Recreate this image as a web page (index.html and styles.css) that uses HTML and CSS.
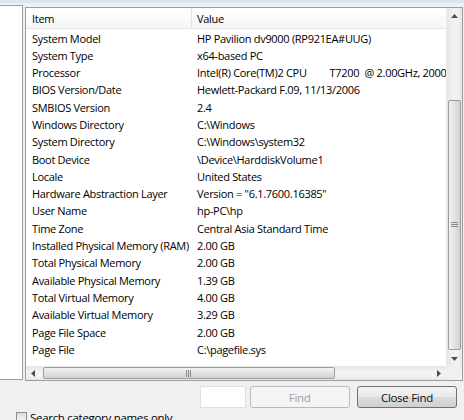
FILE: index.html
```html
<!DOCTYPE html>
<html>
<head>
<meta charset="utf-8">
<link rel="stylesheet" href="styles.css">
</head>
<body>
<div class="window">
  <div class="topstrip"></div>
  <div class="panes">
    <div class="tree"></div>
    <div class="listbox">
      <div class="listmain">
        <div class="listcontent">
          <div class="header">
            <div class="hc c1">Item</div>
            <div class="hc c2">Value</div>
          </div>
          <div class="rows">
            <div class="row"><span class="c1">System Model</span><span class="c2">HP Pavilion dv9000 (RP921EA#UUG)</span></div>
            <div class="row"><span class="c1">System Type</span><span class="c2">x64-based PC</span></div>
            <div class="row"><span class="c1">Processor</span><span class="c2">Intel(R) Core(TM)2 CPU         T7200  @ 2.00GHz, 2000 Mhz, 2 Core(s)</span></div>
            <div class="row"><span class="c1">BIOS Version/Date</span><span class="c2">Hewlett-Packard F.09, 11/13/2006</span></div>
            <div class="row"><span class="c1">SMBIOS Version</span><span class="c2">2.4</span></div>
            <div class="row"><span class="c1">Windows Directory</span><span class="c2">C:\Windows</span></div>
            <div class="row"><span class="c1">System Directory</span><span class="c2">C:\Windows\system32</span></div>
            <div class="row"><span class="c1">Boot Device</span><span class="c2">\Device\HarddiskVolume1</span></div>
            <div class="row"><span class="c1">Locale</span><span class="c2">United States</span></div>
            <div class="row"><span class="c1">Hardware Abstraction Layer</span><span class="c2">Version = "6.1.7600.16385"</span></div>
            <div class="row"><span class="c1">User Name</span><span class="c2">hp-PC\hp</span></div>
            <div class="row"><span class="c1">Time Zone</span><span class="c2">Central Asia Standard Time</span></div>
            <div class="row"><span class="c1">Installed Physical Memory (RAM)</span><span class="c2">2.00 GB</span></div>
            <div class="row"><span class="c1">Total Physical Memory</span><span class="c2">2.00 GB</span></div>
            <div class="row"><span class="c1">Available Physical Memory</span><span class="c2">1.39 GB</span></div>
            <div class="row"><span class="c1">Total Virtual Memory</span><span class="c2">4.00 GB</span></div>
            <div class="row"><span class="c1">Available Virtual Memory</span><span class="c2">3.29 GB</span></div>
            <div class="row"><span class="c1">Page File Space</span><span class="c2">2.00 GB</span></div>
            <div class="row"><span class="c1">Page File</span><span class="c2">C:\pagefile.sys</span></div>
          </div>
        </div>
        <div class="vscroll">
          <div class="sarrow">
            <svg width="7" height="4" viewBox="0 0 7 4"><path d="M0 4 L3.5 0 L7 4 Z" fill="#4d4d4d"/></svg>
          </div>
          <div class="vtrack">
            <div class="vthumb">
              <svg width="7" height="6" viewBox="0 0 7 6"><path d="M0 0.5H7M0 2.5H7M0 4.5H7" stroke="#8a8a8a" stroke-width="1"/></svg>
            </div>
          </div>
          <div class="sarrow">
            <svg width="7" height="4" viewBox="0 0 7 4"><path d="M0 0 L3.5 4 L7 0 Z" fill="#4d4d4d"/></svg>
          </div>
        </div>
      </div>
      <div class="hrow">
        <div class="hscroll">
          <div class="harrow">
            <svg width="4" height="7" viewBox="0 0 4 7"><path d="M4 0 L0 3.5 L4 7 Z" fill="#4d4d4d"/></svg>
          </div>
          <div class="htrack">
            <div class="hthumb">
              <svg width="6" height="7" viewBox="0 0 6 7"><path d="M0.5 0V7M2.5 0V7M4.5 0V7" stroke="#8a8a8a" stroke-width="1"/></svg>
            </div>
          </div>
          <div class="harrow">
            <svg width="4" height="7" viewBox="0 0 4 7"><path d="M0 0 L4 3.5 L0 7 Z" fill="#4d4d4d"/></svg>
          </div>
        </div>
        <div class="corner"></div>
      </div>
    </div>
  </div>
  <div class="findrow">
    <div class="findbox"></div>
    <div class="btn disabled">Find</div>
    <div class="btn">Close Find</div>
  </div>
  <div class="checkrow">
    <span class="checkbox"></span>
    <span class="checklabel">Search category names only</span>
  </div>
</div>
</body>
</html>
```
FILE: styles.css
```css
* { box-sizing: border-box; }
html, body { margin: 0; padding: 0; }
body {
  width: 464px;
  height: 420px;
  overflow: hidden;
  background: #f0f0f0;
  font-family: "Open Sans", "Noto Sans", sans-serif;
  font-size: 11px;
  letter-spacing: -0.3px;
  color: #000000;
}
.window { width: 464px; height: 420px; display: flex; flex-direction: column; }
.topstrip { height: 3px; background: #dde5ef; flex: none; }
.panes { display: flex; align-items: flex-start; padding-top: 2px; height: 378px; flex: none; }
.tree {
  width: 23px; height: 375px;
  background: #ffffff;
  border-top: 1px solid #a0a0a0;
  border-right: 1px solid #a0a0a0;
  border-bottom: 1px solid #a0a0a0;
  flex: none;
}
.listbox {
  margin-left: 2px;
  margin-top: 2px;
  width: 438px;
  height: 374px;
  border: 1px solid #9a9ea4;
  background: #ffffff;
  display: flex; flex-direction: column;
  flex: none;
}
.listmain { display: flex; height: 358px; flex: none; }
.listcontent { width: 420px; overflow: hidden; flex: none; }
.header {
  display: flex; height: 21px; align-items: center;
  background: linear-gradient(#ffffff, #f5f6f8);
  border-bottom: 1px solid #e5e5e5;
}
.hc { height: 100%; display: flex; align-items: center; }
.c1 { width: 166px; padding-left: 6px; flex: none; white-space: pre; overflow: hidden; }
.c2 { padding-left: 5px; white-space: pre; flex: none; }
.header .c1 { border-right: 1px solid #e3e3e3; }
.rows { display: flex; flex-direction: column; padding-top: 0.5px; }
.row { display: flex; height: 17.3px; line-height: 17.3px; }
.vscroll {
  width: 16px; flex: none;
  background: linear-gradient(to right, #e6e6e6, #f2f2f2 40%, #f2f2f2 70%, #e6e6e6);
  border-left: 1px solid #ececec;
  display: flex; flex-direction: column;
}
.sarrow { height: 15px; display: flex; align-items: center; justify-content: center; flex: none; }
.vtrack { flex: 1; padding-top: 77px; display: flex; justify-content: center; }
.vthumb {
  width: 13px; height: 250px;
  border: 1px solid #9c9c9c; border-radius: 2px;
  background: linear-gradient(to right, #f2f2f2, #e2e2e2 50%, #d2d2d2);
  display: flex; align-items: center; justify-content: center;
}
.hrow { display: flex; height: 14px; flex: none; }
.hscroll {
  width: 420px; flex: none; display: flex;
  background: linear-gradient(#e6e6e6, #f2f2f2 40%, #f2f2f2 70%, #e6e6e6);
}
.harrow { width: 14px; display: flex; align-items: center; justify-content: center; flex: none; }
.htrack { flex: 1; padding-left: 3px; display: flex; align-items: center; }
.hthumb {
  width: 292px; height: 12px;
  border: 1px solid #9c9c9c; border-radius: 2px;
  background: linear-gradient(#f2f2f2, #e2e2e2 50%, #d2d2d2);
  display: flex; align-items: center; justify-content: center;
}
.corner { flex: 1; background: #f0f0f0; }
.findrow { display: flex; align-items: center; height: 24px; margin-top: 4px; padding-left: 200px; flex: none; }
.findbox { width: 46px; height: 22px; background: #ffffff; border: 1px solid #e0e0e0; margin-right: 4px; }
.btn {
  width: 101px; height: 22px; margin-right: 7px;
  border: 1px solid #707070; border-radius: 3px;
  background: linear-gradient(#f2f2f2 0%, #ebebeb 48%, #dddddd 52%, #cfcfcf 100%);
  display: flex; align-items: center; justify-content: center;
  font-size: 11.5px; color: #111;
}
.btn.disabled {
  border-color: #b8bcbf;
  background: #f4f4f4;
  color: #a0a0a0;
}
.checkrow { display: flex; align-items: flex-start; padding-left: 16px; margin-top: 2px; gap: 3px; height: 12px; overflow: visible; flex: none; }
.checkbox { width: 11px; height: 11px; margin-top: 1px; border: 1px solid #8f8f8f; background: linear-gradient(#dcdcdc, #f8f8f8); flex: none; }
.checklabel { font-size: 11.5px; line-height: 13px; white-space: nowrap; }
```
